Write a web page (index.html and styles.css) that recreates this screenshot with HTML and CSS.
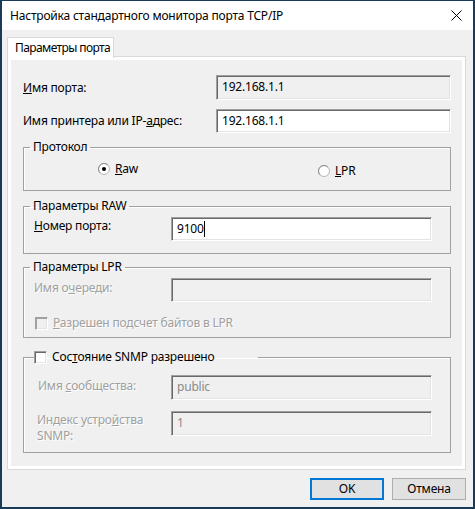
FILE: index.html
```html
<!DOCTYPE html>
<html lang="ru">
<head>
<meta charset="utf-8">
<title>Настройка стандартного монитора порта TCP/IP</title>
<link rel="stylesheet" href="styles.css">
</head>
<body>
<div class="window">
  <div class="titlebar">
    <span class="title">Настройка стандартного монитора порта TCP/IP</span>
    <svg class="close" width="11" height="11" viewBox="0 0 11 11"><path d="M0.5 0.5 L10.5 10.5 M10.5 0.5 L0.5 10.5" stroke="#000" stroke-width="1" fill="none"/></svg>
  </div>
  <div class="client">
    <div class="tabs"><div class="tab">Параметры порта</div></div>
    <div class="panel">
      <div class="page">
        <div class="row row-first">
          <span class="lbl lbl-top"><u>И</u>мя порта:</span>
          <div class="edit edit-top edit-ro">192.168.1.1</div>
        </div>
        <div class="row row-second">
          <span class="lbl lbl-top">Имя принтера или IP-<u>а</u>дрес:</span>
          <div class="edit edit-top edit-h24">192.168.1.1</div>
        </div>

        <fieldset class="group g-protocol">
          <legend class="legend">Протокол</legend>
          <div class="protocol-body">
            <div class="radio">
              <svg class="radio-icon" width="12" height="12" viewBox="0 0 12 12">
                <circle cx="6" cy="6" r="5.5" fill="#fff" stroke="#b5b5b5"/>
                <path d="M2.1 9.9 A5.5 5.5 0 0 1 9.9 2.1" stroke="#8e8e8e" fill="none"/>
                <circle cx="6" cy="6" r="2" fill="#000"/>
              </svg>
              <span><u>R</u>aw</span>
            </div>
            <div class="radio radio-lpr">
              <svg class="radio-icon" width="12" height="12" viewBox="0 0 12 12">
                <circle cx="6" cy="6" r="5.5" fill="#fff" stroke="#b5b5b5"/>
                <path d="M2.1 9.9 A5.5 5.5 0 0 1 9.9 2.1" stroke="#8e8e8e" fill="none"/>
              </svg>
              <span><u>L</u>PR</span>
            </div>
          </div>
        </fieldset>

        <fieldset class="group g-raw">
          <legend class="legend">Параметры RAW</legend>
          <div class="group-body raw-body">
            <div class="grow">
              <span class="lbl lbl-grp"><u>Н</u>омер порта:</span>
              <div class="edit edit-grp">9100<span class="caret"></span></div>
            </div>
          </div>
        </fieldset>

        <fieldset class="group g-lpr">
          <legend class="legend">Параметры LPR</legend>
          <div class="group-body lpr-body">
            <div class="grow">
              <span class="lbl lbl-grp lbl-dis lbl-queue">Имя о<u>ч</u>ереди:</span>
              <div class="edit edit-grp edit-ro"></div>
            </div>
            <div class="check-row">
              <span class="check check-dis"></span>
              <span class="lbl-dis"><u>Р</u>азрешен подсчет байтов в LPR</span>
            </div>
          </div>
        </fieldset>

        <fieldset class="group g-snmp">
          <legend class="legend legend-snmp">
            <span class="check"></span>
            <span>Сос<u>т</u>ояние SNMP разрешено</span>
          </legend>
          <div class="group-body snmp-body">
            <div class="grow">
              <span class="lbl lbl-grp lbl-dis lbl-snmp lbl-comm">Имя <u>с</u>ообщества:</span>
              <div class="edit edit-grp edit-ro edit-dis edit-h25">public</div>
            </div>
            <div class="grow grow-index">
              <span class="lbl lbl-grp lbl-dis lbl-snmp lbl-index">Индекс устро<u>й</u>ства<br>SNMP:</span>
              <div class="edit edit-grp edit-ro edit-dis edit-h25">1</div>
            </div>
          </div>
        </fieldset>
      </div>
    </div>
    <div class="buttons">
      <button class="btn btn-default" type="button">OK</button>
      <button class="btn" type="button">Отмена</button>
    </div>
  </div>
</div>
</body>
</html>
```

FILE: styles.css
```css
html, body {
  margin: 0;
  padding: 0;
}
body {
  width: 475px;
  height: 509px;
  overflow: hidden;
  font-family: "Noto Sans", "Open Sans", sans-serif;
  font-size: 12px;
  letter-spacing: -0.2px;
  color: #000;
}
.window {
  box-sizing: border-box;
  width: 475px;
  height: 509px;
  border-style: solid;
  border-color: #1a3a5a;
  border-width: 1px 2px 2px 2px;
  background: #f0f0f0;
  display: flex;
  flex-direction: column;
}
.titlebar {
  height: 29px;
  background: #fff;
  display: flex;
  align-items: center;
  padding: 0 11px 0 8px;
  justify-content: space-between;
}
.title {
  font-size: 12px;
  line-height: 16px;
  margin-top: 1px;
  white-space: nowrap;
}
.close {
  display: block;
}
.client {
  flex: 1;
  display: flex;
  flex-direction: column;
  padding: 7px 7px 0 5px;
}
.tabs {
  display: flex;
  height: 20px;
  position: relative;
  z-index: 1;
  margin-bottom: -1px;
}
.tab {
  box-sizing: border-box;
  width: 107px;
  height: 21px;
  background: #fff;
  border: 1px solid #d9d9d9;
  border-bottom: none;
  padding: 0 0 0 7px;
  line-height: 19px;
  white-space: nowrap;
  letter-spacing: -0.6px;
}
.panel {
  box-sizing: border-box;
  height: 414px;
  border: 1px solid #d9d9d9;
  background: #fff;
  padding: 3px;
}
.page {
  box-sizing: border-box;
  height: 406px;
  background: #f0f0f0;
  padding: 15px 0 0 12px;
  display: flex;
  flex-direction: column;
}
.row {
  display: flex;
  align-items: center;
}
.row-first { height: 25px; }
.row-second { height: 24px; margin-top: 9px; }
.lbl {
  line-height: 16px;
  white-space: nowrap;
}
.lbl-top {
  width: 193px;
}
.edit {
  box-sizing: border-box;
  background: #fff;
  border-style: solid;
  border-width: 1px;
  border-color: #a0a0a0 #fff #fff #a0a0a0;
  box-shadow: inset 1px 1px 0 #696969, inset -1px -1px 0 #e3e3e3;
  padding: 3px 5px 0 5px;
  line-height: 16px;
  white-space: nowrap;
}
.edit-top {
  width: 235px;
  height: 25px;
}
.edit-h24 { height: 24px; }
.edit-ro { background: #f0f0f0; }
.edit-dis { color: #8a8a8a; }
.caret {
  display: inline-block;
  width: 1px;
  height: 16px;
  background: #000;
  vertical-align: top;
  margin-left: 0;
}

.group {
  box-sizing: border-box;
  width: 428px;
  margin: 0;
  padding: 0;
  min-width: 0;
  border: 1px solid #a0a0a0;
  box-shadow: inset 1px 1px 0 #fff;
}
.legend {
  padding: 0 3px;
  margin-left: 6px;
  line-height: 16px;
  font-size: 12px;
}
.g-protocol { margin-top: 6px; height: 52px; }
.g-raw { margin-top: 7px; height: 56px; }
.g-lpr { margin-top: 5px; height: 79px; }
.g-snmp { margin-top: 11px; height: 104px; }

.protocol-body {
  display: grid;
  grid-template-columns: 220px auto;
  padding: 6px 0 0 74px;
}
.radio {
  display: flex;
  align-items: center;
  gap: 5px;
  height: 16px;
  line-height: 16px;
}
.radio-icon { display: block; }
.radio-lpr { margin-top: 2px; }

.group-body {
  padding-left: 10px;
}
.raw-body { padding-top: 3px; }
.lpr-body { padding-top: 3px; }
.snmp-body { padding-top: 10px; }
.grow {
  display: flex;
  align-items: flex-start;
}
.grow-index { margin-top: 11px; }
.lbl-grp {
  width: 137px;
  padding-top: 1px;
}
.lbl-queue { padding-top: 2px; }
.lbl-snmp {
  width: 133px;
  margin-left: 4px;
}
.lbl-comm { padding-top: 3px; }
.lbl-index { padding-top: 1px; margin-left: 3px; width: 134px; }
.edit-grp {
  width: 261px;
  height: 24px;
}
.edit-h25 { height: 25px; }
.lbl-dis {
  color: #a0a0a0;
  text-shadow: 1px 1px 0 #fff;
}

.check-row {
  display: flex;
  align-items: center;
  gap: 5px;
  height: 16px;
  margin-top: 13px;
  margin-left: 1px;
  line-height: 16px;
}
.check {
  box-sizing: border-box;
  display: inline-block;
  width: 13px;
  height: 13px;
  background: #fff;
  border-style: solid;
  border-width: 1px;
  border-color: #a0a0a0 #fff #fff #a0a0a0;
  box-shadow: inset 1px 1px 0 #696969, inset -1px -1px 0 #e3e3e3;
  flex: none;
}
.check-dis {
  background: #f0f0f0;
  box-shadow: inset 1px 1px 0 #a0a0a0, inset -1px -1px 0 #e3e3e3;
}
.legend-snmp {
  box-sizing: border-box;
  width: 224px;
  margin-left: 10px;
  padding: 0;
  display: flex;
  align-items: center;
  gap: 5px;
}

.buttons {
  display: flex;
  justify-content: flex-end;
  gap: 8px;
  margin-top: 8px;
}
.btn {
  box-sizing: border-box;
  width: 74px;
  height: 22px;
  background: #e1e1e1;
  border: 1px solid #adadad;
  font-family: "Noto Sans", "Open Sans", sans-serif;
  font-size: 12px;
  letter-spacing: -0.2px;
  color: #000;
  padding: 0;
  line-height: 18px;
  margin: 0;
}
.btn-default {
  border: 2px solid #0078d7;
}
```
